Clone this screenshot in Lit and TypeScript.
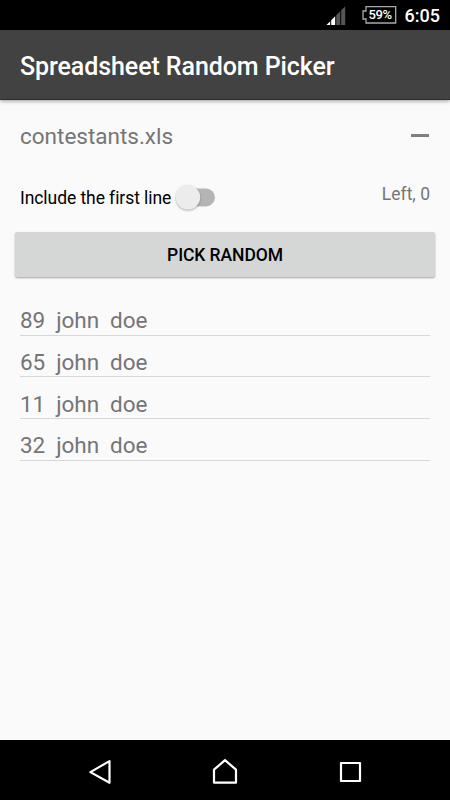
import { LitElement, html, css } from "lit";
import { customElement, property } from "lit/decorators.js";

@customElement("status-bar")
class StatusBar extends LitElement {
  static styles = css`
    :host { display: flex; height: 30px; flex: none; background: #000; color: #fff; justify-content: flex-end; align-items: flex-start; padding-right: 10px; }
    .signal { width: 20px; height: 20px; margin: 6px 15px 0 0; }
    .battery { display: grid; width: 36px; height: 20px; margin: 5px 8px 0 0; }
    .battery svg, .battery span { grid-area: 1 / 1; }
    .battery span { font: 500 13px/20px Roboto, sans-serif; padding-left: 8px; white-space: nowrap; letter-spacing: -0.4px; }
    .clock { font: 500 18px/30px Roboto, sans-serif; height: 30px; padding-top: 1px; box-sizing: border-box; }
  `;
  render() {
    return html`
      <svg class="signal" viewBox="0 0 20 20">
        <path d="M.5 19 4.2 15.3V19ZM5.2 14.3 9.2 10.3V19H5.2Z" fill="#fff" />
        <path d="M10.2 9.3 14.2 5.3V19H10.2ZM15.2 4.3 19.2 .3V19H15.2Z" fill="#555" />
      </svg>
      <div class="battery">
        <svg width="36" height="20" viewBox="0 0 36 20">
          <path d="M5 1.7H34.7V18H5V14H2V6H5Z" fill="none" stroke="#aaa" stroke-width="1.3" />
        </svg>
        <span>59%</span>
      </div>
      <div class="clock">6:05</div>
    `;
  }
}

@customElement("toggle-switch")
class ToggleSwitch extends LitElement {
  static styles = css`
    :host { display: block; width: 42px; height: 30px; }
    svg { display: block; }
    .thumb { filter: drop-shadow(0 1px 1px rgba(0, 0, 0, 0.3)); }
  `;
  render() {
    return html`<svg width="42" height="30" viewBox="0 0 42 30">
      <rect x="5" y="5.5" width="35" height="18" rx="9" fill="#b5b5b5" />
      <circle class="thumb" cx="13" cy="14.3" r="12.2" fill="#ececec" />
    </svg>`;
  }
}

@customElement("nav-bar")
class NavBar extends LitElement {
  static styles = css`
    :host { display: flex; height: 60px; flex: none; background: #000; justify-content: center; gap: 95px; align-items: center; }
    svg { width: 30px; height: 30px; fill: none; stroke: #fff; stroke-width: 2.2; stroke-linejoin: round; }
  `;
  render() {
    return html`
      <svg viewBox="0 0 30 30"><path d="M5.4 17.1 24.5 6.1V27.8Z" /></svg>
      <svg viewBox="0 0 30 30"><path d="M4 14.7 15 5.2 26 14.7V27.7H4Z" /></svg>
      <svg viewBox="0 0 30 30"><path d="M6 8H25V26H6Z" /></svg>
    `;
  }
}

@customElement("app-root")
class AppRoot extends LitElement {
  @property({ type: Array }) picks = ["89  john  doe", "65  john  doe", "11  john  doe", "32  john  doe"];

  static styles = css`
    :host { display: flex; flex-direction: column; height: 800px; background: #fafafa; font-family: Roboto, sans-serif; overflow: hidden; }
    .title { height: 70px; flex: none; box-sizing: border-box; background: #424242; color: #fff; padding: 2px 20px 0; font-size: 25px; font-weight: 500; letter-spacing: -0.08px; line-height: 70px; border-bottom: 1px solid #2c2c2c; box-shadow: 0 1px 4px rgba(0, 0, 0, 0.4); }
    main { flex: 1; padding: 0 20px; color: #757575; }
    .file { display: flex; justify-content: space-between; align-items: center; height: 44px; margin-top: 14px; font-size: 22.5px; line-height: 44px; }
    .minus { width: 18px; height: 3px; background: #808080; margin: 0 1px 1px 0; }
    .options { display: flex; align-items: center; height: 30px; margin-top: 25px; }
    .label { color: #000; font-size: 17.5px; letter-spacing: -0.07px; white-space: nowrap; width: 155px; }
    .left { margin-left: auto; padding-bottom: 9px; font-size: 17.5px; }
    .pick { display: block; width: 420px; height: 45px; margin: 19px -5px 0; padding: 1px 0 0; border: 0; border-radius: 2.5px; background: #d5d7d6; color: #000; font: 500 17.5px/44px Roboto, sans-serif; letter-spacing: -0.08px; box-shadow: 0 1px 2px rgba(0, 0, 0, 0.35); }
    .list { margin-top: 17px; }
    .row { height: 41.67px; box-sizing: border-box; border-bottom: 1.5px solid #d8d8d8; padding-top: 12.3px; font-size: 22.5px; letter-spacing: -0.06px; line-height: 28px; white-space: pre; }
  `;
  render() {
    return html`
      <status-bar></status-bar>
      <header class="title">Spreadsheet Random Picker</header>
      <main>
        <div class="file"><span>contestants.xls</span><div class="minus"></div></div>
        <div class="options">
          <span class="label">Include the first line</span>
          <toggle-switch></toggle-switch>
          <span class="left">Left, 0</span>
        </div>
        <button class="pick">PICK RANDOM</button>
        <div class="list">${this.picks.map((p) => html`<div class="row">${p}</div>`)}</div>
      </main>
      <nav-bar></nav-bar>
    `;
  }
}
